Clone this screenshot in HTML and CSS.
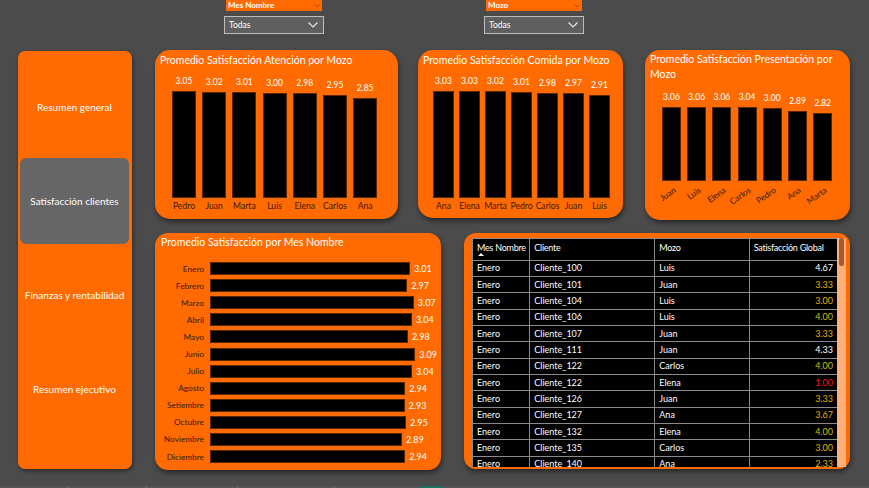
FILE: index.html
```html
<!DOCTYPE html>
<html lang="es">
<head>
<meta charset="utf-8">
<title>Satisfacción clientes</title>
<link rel="stylesheet" href="styles.css">
</head>
<body>
<div class="page">
  <div class="slicers">
    <div class="slicer s1">
      <div class="slicer-head"><span>Mes Nombre</span><svg class="mini" width="6" height="4" viewBox="0 0 6 4"><polyline points="0.5,0.5 3,3 5.5,0.5"/></svg></div>
      <div class="dropdown"><span>Todas</span><svg class="chev" width="10" height="6" viewBox="0 0 10 6"><polyline points="0.5,0.5 5,5 9.5,0.5"/></svg></div>
    </div>
    <div class="slicer s2">
      <div class="slicer-head"><span>Mozo</span><svg class="mini" width="6" height="4" viewBox="0 0 6 4"><polyline points="0.5,0.5 3,3 5.5,0.5"/></svg></div>
      <div class="dropdown"><span>Todas</span><svg class="chev" width="10" height="6" viewBox="0 0 10 6"><polyline points="0.5,0.5 5,5 9.5,0.5"/></svg></div>
    </div>
  </div>

  <div class="main">
    <nav class="nav">
      <div class="nav-btn">Resumen general</div>
      <div class="nav-btn active">Satisfacción clientes</div>
      <div class="nav-btn">Finanzas y rentabilidad</div>
      <div class="nav-btn">Resumen ejecutivo</div>
    </nav>

    <div class="content">
      <div class="row row1">
        <section class="card chart c1">
          <h2 class="title">Promedio Satisfacción Atención por Mozo</h2>
          <div class="cols">
            <div class="col"><span class="val">3.05</span><div class="bar" style="height:107px"></div><span class="cat">Pedro</span></div>
            <div class="col"><span class="val">3.02</span><div class="bar" style="height:106px"></div><span class="cat">Juan</span></div>
            <div class="col"><span class="val">3.01</span><div class="bar" style="height:105.7px"></div><span class="cat">Marta</span></div>
            <div class="col"><span class="val">3.00</span><div class="bar" style="height:105.3px"></div><span class="cat">Luis</span></div>
            <div class="col"><span class="val">2.98</span><div class="bar" style="height:104.6px"></div><span class="cat">Elena</span></div>
            <div class="col"><span class="val">2.95</span><div class="bar" style="height:103.5px"></div><span class="cat">Carlos</span></div>
            <div class="col"><span class="val">2.85</span><div class="bar" style="height:100px"></div><span class="cat">Ana</span></div>
          </div>
        </section>

        <section class="card chart c2">
          <h2 class="title">Promedio Satisfacción Comida por Mozo</h2>
          <div class="cols">
            <div class="col"><span class="val">3.03</span><div class="bar" style="height:107px"></div><span class="cat">Ana</span></div>
            <div class="col"><span class="val">3.03</span><div class="bar" style="height:107px"></div><span class="cat">Elena</span></div>
            <div class="col"><span class="val">3.02</span><div class="bar" style="height:106.6px"></div><span class="cat">Marta</span></div>
            <div class="col"><span class="val">3.01</span><div class="bar" style="height:106.3px"></div><span class="cat">Pedro</span></div>
            <div class="col"><span class="val">2.98</span><div class="bar" style="height:105.2px"></div><span class="cat">Carlos</span></div>
            <div class="col"><span class="val">2.97</span><div class="bar" style="height:104.8px"></div><span class="cat">Juan</span></div>
            <div class="col"><span class="val">2.91</span><div class="bar" style="height:102.7px"></div><span class="cat">Luis</span></div>
          </div>
        </section>

        <section class="card chart c3">
          <h2 class="title">Promedio Satisfacción Presentación por Mozo</h2>
          <div class="cols">
            <div class="col"><span class="val">3.06</span><div class="bar" style="height:74px"></div><span class="rot"><span>Juan</span></span></div>
            <div class="col"><span class="val">3.06</span><div class="bar" style="height:74px"></div><span class="rot"><span>Luis</span></span></div>
            <div class="col"><span class="val">3.06</span><div class="bar" style="height:74px"></div><span class="rot"><span>Elena</span></span></div>
            <div class="col"><span class="val">3.04</span><div class="bar" style="height:73.6px"></div><span class="rot"><span>Carlos</span></span></div>
            <div class="col"><span class="val">3.00</span><div class="bar" style="height:72.6px"></div><span class="rot"><span>Pedro</span></span></div>
            <div class="col"><span class="val">2.89</span><div class="bar" style="height:69.9px"></div><span class="rot"><span>Ana</span></span></div>
            <div class="col"><span class="val">2.82</span><div class="bar" style="height:68.2px"></div><span class="rot"><span>Marta</span></span></div>
          </div>
        </section>
      </div>

      <div class="row row2">
        <section class="card months">
          <h2 class="title">Promedio Satisfacción por Mes Nombre</h2>
          <div class="hrows">
            <div class="hrow"><span class="mlabel">Enero</span><div class="hbar" style="width:200px"></div><span class="hval">3.01</span></div>
            <div class="hrow"><span class="mlabel">Febrero</span><div class="hbar" style="width:197.2px"></div><span class="hval">2.97</span></div>
            <div class="hrow"><span class="mlabel">Marzo</span><div class="hbar" style="width:203.8px"></div><span class="hval">3.07</span></div>
            <div class="hrow"><span class="mlabel">Abril</span><div class="hbar" style="width:201.9px"></div><span class="hval">3.04</span></div>
            <div class="hrow"><span class="mlabel">Mayo</span><div class="hbar" style="width:197.9px"></div><span class="hval">2.98</span></div>
            <div class="hrow"><span class="mlabel">Junio</span><div class="hbar" style="width:205.2px"></div><span class="hval">3.09</span></div>
            <div class="hrow"><span class="mlabel">Julio</span><div class="hbar" style="width:201.9px"></div><span class="hval">3.04</span></div>
            <div class="hrow"><span class="mlabel">Agosto</span><div class="hbar" style="width:195.2px"></div><span class="hval">2.94</span></div>
            <div class="hrow"><span class="mlabel">Setiembre</span><div class="hbar" style="width:194.6px"></div><span class="hval">2.93</span></div>
            <div class="hrow"><span class="mlabel">Octubre</span><div class="hbar" style="width:195.9px"></div><span class="hval">2.95</span></div>
            <div class="hrow"><span class="mlabel">Noviembre</span><div class="hbar" style="width:191.9px"></div><span class="hval">2.89</span></div>
            <div class="hrow"><span class="mlabel">Diciembre</span><div class="hbar" style="width:195.2px"></div><span class="hval">2.94</span></div>
          </div>
        </section>

        <section class="card tablecard">
          <div class="grid-wrap">
            <table class="grid">
              <colgroup><col class="w1"><col class="w2"><col class="w3"><col class="w4"></colgroup>
              <thead>
                <tr><th>Mes Nombre<span class="sort"></span></th><th>Cliente</th><th class="brown">Mozo</th><th>Satisfacción Global</th></tr>
              </thead>
              <tbody>
                <tr><td>Enero</td><td>Cliente_100</td><td class="brown">Luis</td><td class="num hi">4.67</td></tr>
                <tr><td>Enero</td><td>Cliente_101</td><td class="brown">Juan</td><td class="num mid">3.33</td></tr>
                <tr><td>Enero</td><td>Cliente_104</td><td class="brown">Luis</td><td class="num mid">3.00</td></tr>
                <tr><td>Enero</td><td>Cliente_106</td><td class="brown">Luis</td><td class="num four">4.00</td></tr>
                <tr><td>Enero</td><td>Cliente_107</td><td class="brown">Juan</td><td class="num mid">3.33</td></tr>
                <tr><td>Enero</td><td>Cliente_111</td><td class="brown">Juan</td><td class="num hi">4.33</td></tr>
                <tr><td>Enero</td><td>Cliente_122</td><td class="brown">Carlos</td><td class="num four">4.00</td></tr>
                <tr><td>Enero</td><td>Cliente_122</td><td class="brown">Elena</td><td class="num low">1.00</td></tr>
                <tr><td>Enero</td><td>Cliente_126</td><td class="brown">Juan</td><td class="num mid">3.33</td></tr>
                <tr><td>Enero</td><td>Cliente_127</td><td class="brown">Ana</td><td class="num mid">3.67</td></tr>
                <tr><td>Enero</td><td>Cliente_132</td><td class="brown">Elena</td><td class="num four">4.00</td></tr>
                <tr><td>Enero</td><td>Cliente_135</td><td class="brown">Carlos</td><td class="num mid">3.00</td></tr>
                <tr><td>Enero</td><td>Cliente_140</td><td class="brown">Ana</td><td class="num mid">2.33</td></tr>
              </tbody>
            </table>
          </div>
          <div class="scrollbar"><div class="thumb"></div></div>
        </section>
      </div>
    </div>
  </div>

  <div class="tabs">
    <div class="tab t1"></div>
    <div class="tab t2"></div>
    <div class="tab t3"></div>
    <div class="tab t4"></div>
    <div class="tab t5"></div>
    <div class="tab-active"></div>
  </div>
</div>
</body>
</html>
```

FILE: styles.css
```css
* { box-sizing: border-box; margin: 0; padding: 0; }

html, body {
  width: 869px;
  height: 488px;
  overflow: hidden;
  background: #4b4b4b;
}

body {
  font-family: Lato, "Open Sans", "DejaVu Sans", sans-serif;
  color: #ffffff;
}

.page {
  width: 869px;
  height: 488px;
  display: flex;
  flex-direction: column;
}

/* ---------- slicers ---------- */
.slicers {
  height: 34px;
  display: flex;
}

.slicer { width: 100px; }
.s1 { margin-left: 224px; }
.s2 { margin-left: 160px; }

.slicer-head {
  margin: 0 2px 0 2px;
  height: 11px;
  background: #ff6b00;
  display: flex;
  align-items: center;
  justify-content: space-between;
  padding: 0 2px 0 2px;
  font-size: 8px;
  font-weight: 700;
  line-height: 11px;
}

.mini polyline {
  fill: none;
  stroke: #b84a00;
  stroke-width: 1;
}

.dropdown {
  margin-top: 5px;
  height: 18px;
  border: 1px solid #bcbcbc;
  background: #5f5f5f;
  display: flex;
  align-items: center;
  justify-content: space-between;
  padding: 0 5px 0 4px;
  font-size: 8.5px;
}

.chev polyline {
  fill: none;
  stroke: #e6e6e6;
  stroke-width: 1.2;
}

/* ---------- main ---------- */
.main {
  margin-top: 16px;
  height: 420px;
  display: flex;
}

.nav {
  margin-left: 18px;
  margin-top: 1px;
  width: 114px;
  height: 418px;
  background: #ff6b00;
  border-radius: 7px;
  box-shadow: 1px 2px 4px rgba(0, 0, 0, 0.45);
  padding: 13px 3px 0 2px;
  display: flex;
  flex-direction: column;
  gap: 8px;
}

.nav-btn {
  height: 86px;
  border-radius: 6px;
  display: flex;
  align-items: center;
  justify-content: center;
  font-size: 10px;
  color: #ffffff;
}

.nav-btn.active { background: #666666; }

.content {
  margin-left: 23px;
  display: flex;
  flex-direction: column;
}

.row { display: flex; }
.row1 { height: 170px; }
.row2 { margin-top: 13px; }

.card {
  background: #ff6b00;
  box-shadow: 1px 3px 5px rgba(0, 0, 0, 0.45);
}

.title {
  font-size: 10.5px;
  font-weight: 400;
  line-height: 14px;
  color: #ffffff;
  white-space: nowrap;
}

/* ---------- column charts ---------- */
.chart {
  border-radius: 15px;
  display: flex;
  flex-direction: column;
  padding: 3px 0 7px 5px;
}

.c1 { width: 243px; height: 169px; }
.c2 { width: 205px; height: 168px; margin-left: 20px; padding-bottom: 6px; }
.c3 { width: 205px; height: 170px; margin-left: 22px; padding-top: 2px; padding-bottom: 0; }
.c3 .title { white-space: normal; line-height: 15px; padding-right: 4px; }

.cols {
  flex: 1;
  display: flex;
  align-items: flex-end;
}

.c1 .cols { padding-left: 12px; gap: 6.2px; }
.c2 .cols { padding-left: 10px; gap: 5px; }
.c3 .cols { padding-left: 12px; gap: 6.2px; }

.col {
  display: flex;
  flex-direction: column;
  align-items: center;
}

.c1 .col { width: 24px; }
.c2 .col { width: 21px; }
.c3 .col { width: 19px; }

.val {
  font-size: 8.5px;
  line-height: 11px;
  margin-bottom: 4px;
  color: #ffffff;
  white-space: nowrap;
}

.bar {
  width: 100%;
  background: #000000;
  border: 1px solid #5a2600;
}

.cat {
  margin-top: 2px;
  font-size: 8.6px;
  line-height: 12px;
  color: #3b1a04;
  white-space: nowrap;
}

.rot {
  display: block;
  width: 0;
  height: 35px;
  margin-top: 4px;
}

.rot span {
  display: block;
  width: max-content;
  font-size: 8.5px;
  line-height: 11px;
  color: #3b1a04;
  transform-origin: 100% 0;
  transform: translateX(-100%) rotate(-35deg);
}

/* ---------- month bar chart ---------- */
.months {
  width: 286px;
  height: 237px;
  border-radius: 13px;
  padding: 2px 0 0 6px;
}

.hrows {
  margin-top: 11px;
  margin-left: -6px;
  display: flex;
  flex-direction: column;
}

.hrow {
  height: 17.1px;
  display: flex;
  align-items: center;
}

.mlabel {
  width: 49px;
  text-align: right;
  font-size: 8.3px;
  color: #3b1a04;
  white-space: nowrap;
}

.hbar {
  margin-left: 6px;
  height: 13px;
  background: #000000;
  border: 1px solid #5a2600;
}

.hval {
  margin-left: 4px;
  font-size: 9px;
  color: #ffffff;
}

/* ---------- table ---------- */
.tablecard {
  width: 386px;
  height: 236px;
  margin-left: 23px;
  border-radius: 12px;
  padding: 5px 4px 2px 8px;
  display: flex;
}

.grid-wrap {
  width: 365px;
  height: 229px;
  overflow: hidden;
  background: #000000;
}

.grid {
  width: 365px;
  border-collapse: collapse;
  table-layout: fixed;
  font-size: 9px;
  color: #ffffff;
}

.w1 { width: 57.3px; }
.w2 { width: 125px; }
.w3 { width: 94.4px; }
.w4 { width: 88.3px; }

.grid th,
.grid td {
  border: 1px solid #8a8a8a;
  padding: 0 4px;
  white-space: nowrap;
  overflow: hidden;
  text-align: left;
  font-weight: 400;
}

.grid th {
  height: 21.7px;
  vertical-align: top;
  padding-top: 3px;
  position: relative;
  letter-spacing: -0.25px;
}

.grid td {
  height: 16.33px;
  line-height: 14px;
}

.grid th.brown,
.grid td.brown { border-left-color: #5e3a1c; }

.sort {
  position: absolute;
  left: 5px;
  top: 14px;
  width: 0;
  height: 0;
  border-left: 3px solid transparent;
  border-right: 3px solid transparent;
  border-bottom: 3px solid #ffffff;
}

.num { text-align: right !important; }
.hi { color: #ffffff; }
.mid { color: #e0b300; }
.four { color: #cbbd00; }
.low { color: #ff1414; }

.scrollbar {
  width: 9px;
  height: 229px;
  background: #ffb07a;
  padding: 0 2px;
}

.thumb {
  height: 28px;
  background: #a85a2a;
  border-radius: 2px;
}

/* ---------- page tabs strip ---------- */
.tabs {
  margin-top: 16px;
  height: 2px;
  display: flex;
  background: #555555;
}

.tab { border-right: 1px solid #6e6e6e; }
.t1 { width: 68px; }
.t2 { width: 79px; }
.t3 { width: 91px; }
.t4 { width: 97px; }
.t5 { width: 85px; border-right: none; }
.tab-active { width: 23px; background: #1f6f62; }
```
